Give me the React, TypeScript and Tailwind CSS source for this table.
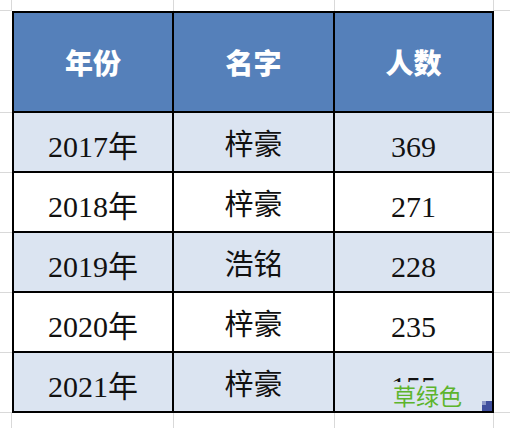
const rows = [
  { year: "2017年", name: "梓豪", count: "369" },
  { year: "2018年", name: "梓豪", count: "271" },
  { year: "2019年", name: "浩铭", count: "228" },
  { year: "2020年", name: "梓豪", count: "235" },
  { year: "2021年", name: "梓豪", count: "155" },
];

const serif = { fontFamily: '"Liberation Serif", "Noto Sans CJK SC", serif' };

export default function App() {
  return (
    <div className="grid h-[428px] w-[510px] grid-cols-[12px_162px_161px_159px_1fr] grid-rows-[11px_102px_60px_60px_60px_60px_60px_1fr] bg-white">
      {/* top margin row */}
      <div className="border-r border-b border-[#d9d9d9]" />
      <div className="border-r border-[#d9d9d9]" />
      <div className="border-r border-[#d9d9d9]" />
      <div className="border-r border-[#d9d9d9]" />
      <div className="border-b border-[#d9d9d9]" />

      {/* header */}
      <div className="border-b border-[#d9d9d9]" />
      {["年份", "名字", "人数"].map((h, i) => (
        <div
          key={h}
          className={`flex items-center justify-center border-t-2 border-r-2 border-b-2 border-black bg-[#5580ba] text-[28px] font-black text-white ${i === 0 ? "border-l-2" : ""}`}
          style={{ fontFamily: '"Noto Sans CJK SC", sans-serif' }}
        >
          {h}
        </div>
      ))}
      <div className="border-b border-[#d9d9d9]" />

      {rows.map((r, ri) => {
        const bg = ri % 2 === 0 ? "bg-[#dbe4f1]" : "bg-white";
        const last = ri === rows.length - 1;
        return [
          <div key={`l${ri}`} className="border-b border-[#d9d9d9]" />,
          <div
            key={`a${ri}`}
            className={`flex items-center justify-center border-l-2 border-r-2 border-b-2 border-black pt-2 text-[30px] text-[#111] ${bg}`}
            style={serif}
          >
            {r.year}
          </div>,
          <div
            key={`b${ri}`}
            className={`flex items-center justify-center border-r-2 border-b-2 border-black pt-2 text-[29px] text-[#111] ${bg}`}
            style={serif}
          >
            {r.name}
          </div>,
          <div
            key={`c${ri}`}
            className={`relative flex items-center justify-center border-r-2 border-b-2 border-black pt-2 text-[30px] text-[#111] ${bg}`}
            style={serif}
          >
            {r.count}
            {last && (
              <>
                <span
                  className="absolute left-[57px] top-[29px] bg-[#dbe4f1] px-[1px] text-[23px] leading-[26px] text-[#5db42c]"
                  style={{ fontFamily: '"Noto Sans CJK SC", sans-serif' }}
                >
                  草绿色
                </span>
                <span className="absolute right-0 bottom-0 h-[10px] w-[10px] bg-[#3f4f9e]">
                  <span className="absolute left-0 top-0 h-[4px] w-[4px] bg-[#8c98c8]" />
                </span>
              </>
            )}
          </div>,
          <div key={`r${ri}`} className="border-b border-[#d9d9d9]" />,
        ];
      })}

      {/* bottom margin row */}
      <div className="border-r border-[#d9d9d9]" />
      <div className="border-r border-[#d9d9d9]" />
      <div className="border-r border-[#d9d9d9]" />
      <div className="border-r border-[#d9d9d9]" />
      <div />
    </div>
  );
}
